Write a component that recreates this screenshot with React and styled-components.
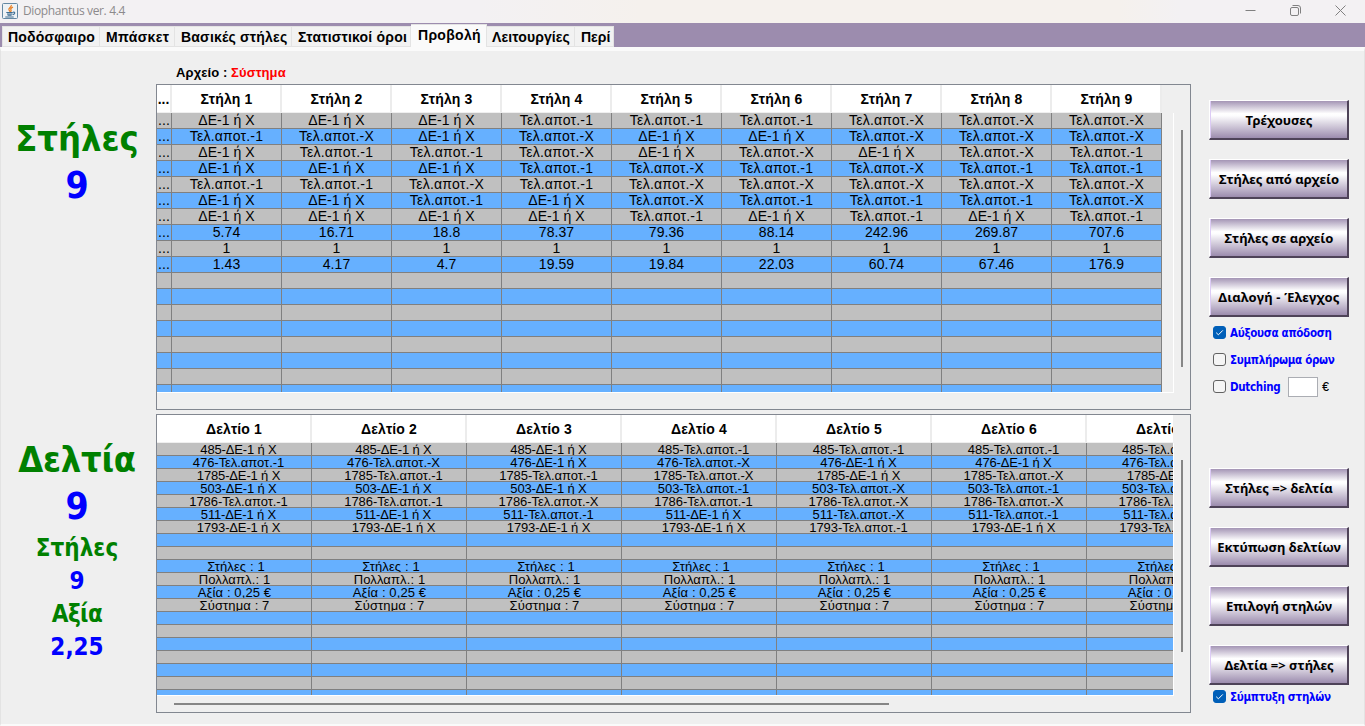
import React from 'react';
import styled, { createGlobalStyle } from 'styled-components';

const GlobalStyle = createGlobalStyle`
    *{
        box-sizing:border-box;
    }

    body{
        margin:0;
        overflow:hidden;
        background-color:#efefef;
        font-family:"Liberation Sans", Arial, sans-serif;
        color:#000;
    }
`;

const Window = styled.div`
    width:1365px;
    height:726px;
    display:flex;
    flex-direction:column;
    background-color:#efefef;
    overflow:hidden;
    white-space:nowrap;
`;

const TitleBar = styled.header`
    height:23px;
    flex:none;
    display:flex;
    align-items:center;
    padding:0 19px 2px 2px;
    background:linear-gradient(90deg, #f3f1f3 0, #f3f1f3 480px, #f5f1ed 640px, #f5f1ed 1120px, #f3f1f3 1180px);
`;

const Title = styled.span`
    flex:1;
    margin-left:5px;
    padding-top:1px;
    font:12px/20px "Open Sans", "Noto Sans", sans-serif;
    letter-spacing:-0.37px;
    color:#8c8a8c;
`;

const WindowButtons = styled.div`
    display:flex;
    align-items:center;
    gap:34px;

    svg{
        display:block;
    }
`;

const TabStrip = styled.nav`
    height:24px;
    flex:none;
    display:flex;
    align-items:flex-end;
    padding-left:2px;
    background-color:#9c8cae;
`;

const Tab = styled.div`
    width:${props => props.width}px;
    height:${props => props.selected ? 23 : 21}px;
    padding-left:${props => props.inset || 6}px;
    line-height:21px;
    font-size:14px;
    font-weight:bold;
    letter-spacing:${props => props.spacing || 0}px;
    background-color:${props => props.selected ? '#fafafa' : '#f2f2f2'};
    border:1px solid #e3e3e3;
    border-left-width:${props => props.first ? 1 : 0}px;
    border-bottom:${props => props.selected ? 0 : 1}px solid #e3e3e3;
`;

const Content = styled.main`
    flex:1;
    display:flex;
    border-top:4px solid #fafafa;
    border-left:1px solid #e3e3e3;
    border-right:1px solid #e3e3e3;
    border-bottom:2px solid #fafafa;
`;

const Side = styled.aside`
    width:155px;
    flex:none;
    display:flex;
    flex-direction:column;
    align-items:center;
    padding:64px 3px 0 0;
`;

const Total = styled.div`
    height:${props => props.height}px;
    line-height:${props => props.height}px;
    margin-top:${props => props.top || 0}px;
    font-family:"DejaVu Sans Condensed", "DejaVu Sans", sans-serif;
    font-stretch:condensed;
    font-weight:bold;
    font-size:${props => props.size}px;
    letter-spacing:${props => props.spacing || 0}px;
    color:${props => props.value ? '#0000ff' : '#008000'};
`;

const Center = styled.section`
    width:1035px;
    flex:none;
    padding-top:12px;
`;

const FileLine = styled.div`
    height:21px;
    line-height:20px;
    padding-left:20px;
    font-size:13px;
    font-weight:bold;
    letter-spacing:0.1px;

    span{
        color:#ff0000;
    }
`;

const Frame = styled.div`
    height:${props => props.height}px;
    margin-bottom:${props => props.gap || 0}px;
    border:1px solid #828790;
    display:grid;
    grid-template-columns:1017px 16px;
    grid-template-rows:${props => props.view}px 1fr;
`;

const View = styled.div`
    display:flex;
    flex-direction:column;
    overflow:hidden;
`;

const HeaderRow = styled.div`
    width:1016px;
    height:28px;
    flex:none;
    display:flex;
    border-bottom:1px solid #efefef;
    overflow:hidden;
`;

const HeaderCell = styled.div`
    width:${props => props.width}px;
    flex:none;
    padding-left:${props => props.narrow ? 0 : 1}px;
    text-align:center;
    font-size:14px;
    font-weight:bold;
    line-height:28px;
    letter-spacing:${props => props.narrow ? 0 : 0.15}px;
    background-color:#fff;
    border-right:2px solid #ececec;
    overflow:hidden;
`;

const Body = styled.div`
    flex:1;
    min-height:0;
    border-right:1px solid #fff;
    border-bottom:1px solid #fff;
    overflow:hidden;
`;

const Row = styled.div`
    display:flex;
    height:${props => props.height}px;
`;

const Cell = styled.div`
    width:${props => props.width}px;
    flex:none;
    height:100%;
    padding-left:${props => props.shift || 0}px;
    text-align:center;
    font-size:${props => props.size}px;
    line-height:${props => props.line}px;
    letter-spacing:${props => props.spacing || 0}px;
    background-color:${props => props.blue ? '#66b0ff' : '#c0c0c0'};
    border-right:1px solid #808080;
    border-bottom:1px solid #808080;
    overflow:hidden;
`;

const VTrack = styled.div`
    padding:45px 0 0 7px;
`;

const VThumb = styled.div`
    width:2px;
    height:${props => props.length}px;
    background-color:#868686;
`;

const HThumb = styled.div`
    width:715px;
    height:2px;
    margin:7px 0 0 17px;
    background-color:#868686;
`;

const Actions = styled.aside`
    display:flex;
    flex-direction:column;
    padding:49px 0 0 18px;
`;

const Button = styled.button`
    width:140px;
    height:40px;
    flex:none;
    margin:0 0 ${props => props.last ? 0 : 19}px;
    padding:1px 0 0 1px;
    font-family:"Noto Sans", sans-serif;
    font-size:13px;
    font-weight:bold;
    letter-spacing:${props => props.spacing || 0}px;
    white-space:nowrap;
    color:#000;
    background:linear-gradient(#a495b5 0, #fff 34%, #fdfdfe 40%, #9c8cae 100%);
    border:1px solid #fff;
    border-right:2px solid #4e4358;
    border-bottom:2px solid #4e4358;
    box-shadow:inset 1px 0 0 #dccbf5;
`;

const Check = styled.label`
    height:${props => props.height || 27}px;
    flex:none;
    display:flex;
    align-items:center;
    gap:4px;
    padding-left:4px;
    font:bold 11.5px "DejaVu Sans Condensed", "DejaVu Sans", sans-serif;
    font-stretch:condensed;
    letter-spacing:-0.3px;
    color:#0000ff;
`;

const Box = styled.span`
    width:13px;
    height:13px;
    flex:none;
    display:flex;
    align-items:center;
    justify-content:center;
    border-radius:3px;
    border:1px solid ${props => props.on ? '#005fb8' : '#626262'};
    background-color:${props => props.on ? '#005fb8' : '#f5f5f5'};
`;

const Stake = styled.input`
    width:30px;
    height:20px;
    margin-left:4px;
    padding:0;
    border:1px solid #abadb3;
    background-color:#fff;
`;

const Euro = styled.span`
    color:#000;
    font:12px "Liberation Sans", Arial, sans-serif;
    -webkit-text-stroke:0.2px #000;
`;

const Gap = styled.div`
    height:${props => props.size}px;
    flex:none;
`;

const tabs = [
    { name: 'Ποδόσφαιρο', width: 98, inset: 5, spacing: 0.2 },
    { name: 'Μπάσκετ', width: 75, spacing: 0.36 },
    { name: 'Βασικές στήλες', width: 117, spacing: 0.2 },
    { name: 'Στατιστικοί όροι', width: 119, spacing: 0.2 },
    { name: 'Προβολή', width: 76, inset: 7, spacing: 0.3, selected: true },
    { name: 'Λειτουργίες', width: 88, inset: 5, spacing: 0.12 },
    { name: 'Περί', width: 39 }
];

const D = 'ΔΕ-1 ή Χ';
const T1 = 'Τελ.αποτ.-1';
const TX = 'Τελ.αποτ.-Χ';

const columnRows = [
    [D, D, D, T1, T1, T1, TX, TX, TX],
    [T1, TX, D, TX, D, D, TX, TX, TX],
    [D, T1, T1, TX, D, TX, D, TX, T1],
    [D, D, D, T1, TX, T1, TX, T1, T1],
    [T1, T1, TX, T1, TX, TX, TX, TX, TX],
    [D, D, T1, D, TX, T1, T1, T1, TX],
    [D, D, D, D, T1, D, T1, D, T1],
    ['5.74', '16.71', '18.8', '78.37', '79.36', '88.14', '242.96', '269.87', '707.6'],
    ['1', '1', '1', '1', '1', '1', '1', '1', '1'],
    ['1.43', '4.17', '4.7', '19.59', '19.84', '22.03', '60.74', '67.46', '176.9']
];

const games = ['485', '476', '1785', '503', '1786', '511', '1793'];

const columnTable = Array.from({ length: 18 }, (_, i) => columnRows[i]
    ? ['...', ...columnRows[i]]
    : Array(10).fill(''));

const slipFooter = ['Στήλες : 1', 'Πολλαπλ.: 1', 'Αξία : 0,25 €', 'Σύστημα : 7'];

const slipTable = Array.from({ length: 20 }, (_, i) => Array.from({ length: 7 }, (_, c) => {
    if (i < games.length) {
        return `${games[i]}-${columnRows[i][c]}`;
    }
    return slipFooter[i - 9] || '';
}));

const JavaIcon = () => (
    <svg width="16" height="16" viewBox="0 0 16 16" fill="none">
        <rect x="0.5" y="0.5" width="15" height="15" rx="1" fill="#eef2f5" stroke="#6488a3" />
        <path d="M9.3 2C10 4 5.8 5 7 7c.4.8 1 .9.8 1.8M11 4.2C8.8 5 8.3 6 9 7c.5.8 0 1.3-.5 1.7" stroke="#ea8024" strokeWidth="1.3" />
        <path d="M4.3 9.5h6.5M5 11h5.5M5.6 12.3h4M3.3 14h8.4M11 9.2c2.6-.5 2 2-.2 2.4" stroke="#3f6d92" strokeWidth="1.1" />
    </svg>
);

const CheckBox = ({ on, height, children }) => (
    <Check height={height}>
        <Box on={on}>
            {on && (
                <svg width="9" height="9" viewBox="0 0 9 9" fill="none">
                    <path d="M1.2 4.7l2.2 2.1 4.4-4.4" stroke="#fff" strokeWidth="1" />
                </svg>
            )}
        </Box>
        {children}
    </Check>
);

const Table = ({ headers, rows, widths, rowHeight, size, line, format }) => (
    <View>
        <HeaderRow>
            {headers.map((header, i) => (
                <HeaderCell key={i} width={widths[i]} narrow={widths[i] < 20}>{header}</HeaderCell>
            ))}
        </HeaderRow>
        <Body>
            {rows.map((row, r) => (
                <Row key={r} height={rowHeight}>
                    {row.map((value, i) => (
                        <Cell key={i} width={widths[i]} size={size} line={line} blue={r % 2 === 1} {...format(value, r)}>{value}</Cell>
                    ))}
                </Row>
            ))}
        </Body>
    </View>
);

const columnFormat = (value) => ({ spacing: value.includes('Τελ') ? 0.2 : 0.05 });

const slipFormat = (value, r) => {
    if (r < games.length) {
        return { shift: 9, spacing: value.includes('Τελ') ? -0.05 : -0.15 };
    }
    return { shift: r === 9 ? 4 : 1, spacing: 0.12 };
};

const columnHeaders = ['...', ...Array.from({ length: 9 }, (_, i) => `Στήλη ${i + 1}`)];
const slipHeaders = Array.from({ length: 7 }, (_, i) => `Δελτίο ${i + 1}`);

const App = () => (
    <>
        <GlobalStyle />
        <Window>
            <TitleBar>
                <JavaIcon />
                <Title>Diophantus ver. 4.4</Title>
                <WindowButtons>
                    <svg width="11" height="11" viewBox="0 0 11 11"><path d="M0.5 5.5h10" stroke="#808080" /></svg>
                    <svg width="11" height="11" viewBox="0 0 11 11" fill="none" stroke="#808080">
                        <rect x="0.5" y="2.5" width="8" height="8" rx="1.5" />
                        <path d="M2.5 .5h5.5a2.5 2.5 0 0 1 2.5 2.5v5.5" />
                    </svg>
                    <svg width="11" height="11" viewBox="0 0 11 11" stroke="#808080"><path d="M.5 .5l10 10M10.5 .5l-10 10" /></svg>
                </WindowButtons>
            </TitleBar>
            <TabStrip>
                {tabs.map((tab, i) => (
                    <Tab key={tab.name} width={tab.width} inset={tab.inset} selected={tab.selected} spacing={tab.spacing} first={i === 0}>{tab.name}</Tab>
                ))}
            </TabStrip>
            <Content>
                <Side>
                    <Total size={36} height={48}>Στήλες</Total>
                    <Total size={37} height={46} value>9</Total>
                    <Total size={36} height={48} top={227} spacing={-0.3}>Δελτία</Total>
                    <Total size={37} height={46} value>9</Total>
                    <Total size={24} height={33} top={2}>Στήλες</Total>
                    <Total size={24} height={33} value>9</Total>
                    <Total size={24} height={33} spacing={-0.6}>Αξία</Total>
                    <Total size={24} height={33} value>2,25</Total>
                </Side>
                <Center>
                    <FileLine>Αρχείο : <span>Σύστημα</span></FileLine>
                    <Frame height={326} gap={4} view={308}>
                        <Table
                            headers={columnHeaders}
                            rows={columnTable}
                            widths={[15, ...Array(9).fill(110)]}
                            rowHeight={16}
                            size={14}
                            line={15}
                            format={columnFormat} />
                        <VTrack><VThumb length={237} /></VTrack>
                    </Frame>
                    <Frame height={299} view={281}>
                        <Table
                            headers={slipHeaders}
                            rows={slipTable}
                            widths={Array(7).fill(155)}
                            rowHeight={13}
                            size={13}
                            line={13}
                            format={slipFormat} />
                        <VTrack><VThumb length={192} /></VTrack>
                        <HThumb />
                    </Frame>
                </Center>
                <Actions>
                    <Button>Τρέχουσες</Button>
                    <Button>Στήλες από αρχείο</Button>
                    <Button>Στήλες σε αρχείο</Button>
                    <Button last spacing={0.2}>Διαλογή - Έλεγχος</Button>
                    <Gap size={2} />
                    <CheckBox on>Αύξουσα απόδοση</CheckBox>
                    <CheckBox>Συμπλήρωμα όρων</CheckBox>
                    <CheckBox>Dutching <Stake /><Euro>€</Euro></CheckBox>
                    <Gap size={68} />
                    <Button>{'Στήλες => δελτία'}</Button>
                    <Button>Εκτύπωση δελτίων</Button>
                    <Button>Επιλογή στηλών</Button>
                    <Button last>{'Δελτία => στήλες'}</Button>
                    <CheckBox on height={23}>Σύμπτυξη στηλών</CheckBox>
                </Actions>
            </Content>
        </Window>
    </>
);

export default App;
